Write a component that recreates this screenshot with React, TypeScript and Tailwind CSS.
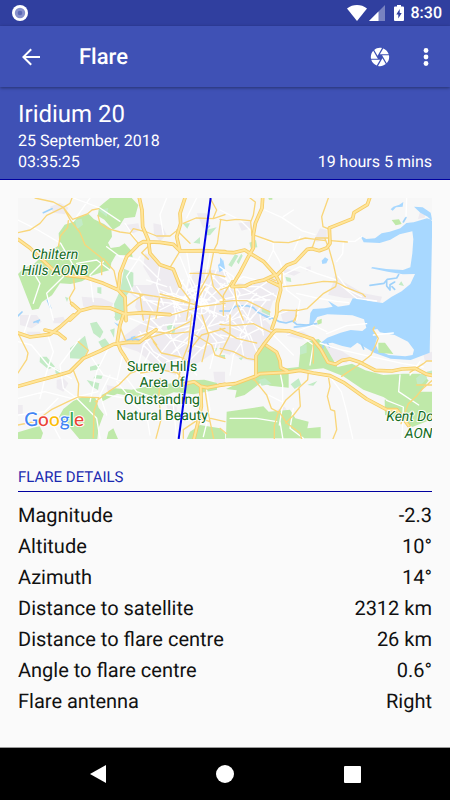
import React from 'react';

interface MapTile {
  x: number;
  y: number;
  urban: string;
  parks: string;
  woods: string;
  water: string;
  islands: string;
  rivers: string;
  streets: string;
  roads: string;
  motorways: string;
}

// Map geometry, one entry per quadrant. Each quadrant keeps its own origin.
const tiles: MapTile[] = [
  {
    x: -24,
    y: -24,
    urban:
      'M345 105l40-5 5 20-25 12zM430 100l25 5 15 30-20 18-18-18zM405 190l25 12 30 25 40 20 10 45 20 15 20-60 40-10 60 10v143H400l-25-40 10-40 45-30-30-50zM120 50l30-12 25 15-10 20-35-5zM215 320l60 5 35 15-10 20-80-10zM560 70l30 0 10 30-20 15zM365 285l70 0 15 35-50 20-40-30zM130 385l30-5 10 20-40 0z',
    parks:
      'M24 252l18-18 30-12 30-30 46-26-2-36 18-26 24-8 12-12 36-12 16 16 30 14 22 16 2 22-12 18 8 16 26-4 16-10 20 22 4 20-22-6-28-2-14 24-4 22-22 6-36 12-26 16-34 8-32-2-24 36-30 20-10 20-20 4zM268 50l18-15 14-11h65l20 21-10 36-32 4-14 22-20 12-26-30-20-12z',
    woods:
      'M342 236l28 12v40l-20 28v60l-34 14-4-48 18-40zM262 292l12 0 0 20-12-4zM588 120l32-8-20 24h-12zM550 158l20-17v20zM518 100l22 0-8 16zM195 90l20-4 4 18-18 14zM265 60l30-6-5 26zM165 320l10 4-4 12z',
    water: 'M640 210l-16 15 4 22 17-10z',
    islands: '',
    rivers: 'M100 68l26-12M112 330l10 24M590 118l8-10M24 378l12-12',
    streets:
      'M24 90l60 30 68 40 40 70M190 24l80 30 60 40M290 170l40 30 60 10 60 60M240 24l-50 70M280 215l-40 40 10 80M200 220l60-10 40 30M60 230l30 50-20 60M160 260l-50 50 20 80M390 200l-40 60 20 50 80 40M450 225l-10 60 20 60M520 270l-30 60 10 60M560 24l-30 60M470 24l-20 50 10 60M345 100l40 60 30-10M530 185l10 60-10 50M600 290l-60 30-40 20M645 280l-75 70 75-20M490 240l80 110-120-50M400 330l170 20-160 40M570 350l75 30M570 350l-40 40M570 350l50-110M570 350l30-160M570 350l-60-150M530 300l60 0 30 30-10 50M520 340l10-40 50-20 50 20M480 290l30 90M430 320l60-10 40 20M450 360l60-30 40-30M600 250l45 50M540 260l60 110M585 300l60 50M550 320l70 60M490 350l70 20M460 310l60 50M510 320l90 10M410 270l60 20M380 290l60 90M552 350a22 22 0 1 0 44 0a22 22 0 1 0-44 0M560 340l30 20M560 360l30-22M575 328v44M556 350h38',
    roads:
      'M24 128l36-8 30-20 20-24 50-24 20-12 6-16M75 24l55 12 30 16 28 36 44-16 14-12 20-4M160 52l22 40 28 36 15 36 24 20 26 20M264 76l6 24 24 16 36 10 30 4 25 30M360 130l10-14 40 10 30 12 40 0 18-14M175 92l-2 20-22 26-6 32M275 204l0 50M190 260l4 36-16 28 8 24M280 206l32 36 13 58M325 300l65 12 90 14 60 14M348 350l50-35M520 100l38-16 52 2 35-12M600 24l20 36-10 24M632 90l-10 70-10 20-14 70-28 50-15 50M510 183l-28 46M425 158l-30 30 20 20M500 120l40 40M450 312l60 16 60 22M510 290l30 40-10 60M600 240l10 50 35 40M540 250l60 0 45 10M480 376l90-26 75-10M448 325l-10 60M390 315l10 75M555 340l30-50',
    motorways:
      'M388 24l8 36 2 50 17 40 5 40 30 34 40 14 20 50M24 148l36 26 42 40 28 26 40 16 55 6 55 18 45 20 20 22 3 70M325 300l5-50 20-50 35-36 15-9 50 2 40 6 20 20 70-1 65 3M525 24l-15 46 2 30-12 40 10 43M185 340l25 22 40-10 50 2 45 18 55-4 80 6M210 362l-30 28',
  },
  {
    x: 606,
    y: -24,
    urban:
      'M55 100l35-6 5 20-30 8zM285 145l15-30 20 5 0 26-30 10zM100 270l60-10 20 20-15 50-60 20zM0 285l60-5 60 10 40 40-20 60H0zM345 255l25 20 60 35 56 10-6 18-50-12-56-2-50-10 15-35zM258 232l14-4 0 14-12 2zM182 245l20-8 40 10-20 10zM600 65l18 4-4 14-20 4zM180 365l50-8 0 40-40 0z',
    parks: 'M515 90l22-2 8 14-18 4zM145 24h12v5h-10z',
    woods:
      'M25 225l20-32 10 4-20 34zM50 215l14-24 4 6-12 26zM88 158l20-8 4 22-20 2zM196 260l16 4 2 12-14-2zM536 284l8-10 8 14zM125 355l25 8 0 14-25-12zM20 275l15 10-10 10z',
    water:
      'M637 90l-16-5-40 12-22 2-18 16-32 10-24 5-20 15-26 2-18-10 10 20 48 2 32-10 28-16 38-9 3 24-3 42-6 42-22 8-50-3-42-6-4 4 50 10 46 8 36-1-14 30-26 22-30 16-27 19-45-7-12-6-33-1-10 20-34 5-30-18 14 18-24 5-35 2-8 12-3 34-47 6 0 6 55-8 16-26 30-8 75 3 35 12 7 25-12 10-35-3-30 8-40 15-25 20 40-5 30 10 25 5 20-15 25 15 25 15 50 18 60 4 57-22zM512 58l8-8 18-6 12-8-2 14-20 2-10 10zM582 50l26 2 24 16 5 26-14-14-22-12zM305 212l10-10 10 6-6 12-12 2zM0 202l8 8-4 30-4-4z',
    islands: '',
    rivers:
      'M450 286l42-6 10-12 28-4 6-10M500 272l0 16 10 12 0-16 14-8M516 290l8 8M550 96l8-14M0 363l30 0 16-14 34-2 20 6 14 14 16 8 20 12',
    streets:
      'M135 60l50 22 60 40 40 12M0 60l60 30 40 40M105 135l55 25 0 20-16 34M160 180l20 36 10 34M240 140l-18 40M370 155l-2 36-18 24M425 140l-20 14-30 0M560 24l-2 56M230 310l60 14 60 10 36 4M180 260l60-30 50 20 60 20M220 60l-30 20M350 275l60 50 60 8M355 260l30 40 40 20M0 260l60 30 60 0 50 30M0 300l70-40 40 10M20 250l40 60-40 80M60 290l80 40-50 60M0 330l90-20 60-40M0 230l40 30 10 60M80 390l20-60 60-20M30 390l80-80M0 280l50 20M10 240l20 60 60 90M40 330l110 0M190 260l10 40 40 30-10 60M130 390l80-30',
    roads:
      'M0 88l20 4 30-4 40 4M90 24l16 12-6 40-8 20 4 40M105 136l55 20 46 2 50-14 30 4 30 4M325 24l-20 56 4 30 20 8M315 146l12 30 14 50 10 46-4 18-36 20-50 46-30 6-44-2-20 12M332 152l50 4M190 290l60-6 60-10 38 2 30 16 50 20 8 8M275 178l12-34 40 0M40 272l10 70 20 48M0 336l40-4 40 0 30 14 40 20M0 300l30-12M36 272l-26 44 0 60M186 280l0-30M166 272l-16-8M230 358l-4 32',
    motorways:
      'M128 24l-2 30-20 46-6 34 0 40-14 24-26 50-24 40M0 186l40 2 34-8 16 10 40 24 36 40 14 26 2 20-10 40-2 34-14 41M170 256l30-30 26-10 36-38 14-2 22 6 22-8 10-14-2-46 10-4 60-24 4-18 40-24 7-20M36 290l40-2 20-10 36-8 34-16M145 272l34 16',
  },
  {
    x: -24,
    y: 351,
    urban:
      'M345 60l70-50 40-10h190v60l-30 50-60 40-60 30-50-20-60-50-60-20zM30 0l50 0 15 20-30 20-35-10zM140 195l20-5 15 15-15 25-20-10zM290 210l24 5 6 25-25 5zM50 50l40 0 5 14-35 6zM610 170l35 0v40h-30zM470 270l30 5 0 20-25-5zM20 270h18v30H24zM430 80l90 10 40 60-50 20-70-30z',
    parks:
      'M190 258l26-12 40 2 10 30 15 20-15 40-4 34h-54l-30-36-38-18 20-36zM24 352l45-14 20-4 10 20-6 18H24zM275 240l40-20 50 4 50-10 60-8 70-10 38-2 38 10v20l-70 14-60-6-50 20-60-6-60-10-46 24zM540 350l30-20 60 10 15 16v16H530zM295 350l15-10 14 32h-34z',
    woods:
      'M180 100l45-38 10 40-15 30-40-2zM240 25l20-5 20 30-10 20-20-15zM265 80l20-10 15 20-20 15zM300 45l14-5-2 28zM90 125l20 0 25 30-20 8-26-22zM135 160l30 15-10 10-18-10zM470 35l15-12 12 16-4 16-16 0zM312 5l16-5 10 8-18 10zM240 155l30-8-2 16-28 4zM230 195l38 10-4 20-18-10zM250 190l8-10 20 2-4 10zM610 100l12-2-4 12zM625 120l20 0v12z',
    water: 'M362 66l14-4 2 12-12 4zM312 22l14 6 2 10zM75 20l16-8-6 14z',
    islands: '',
    rivers: 'M350 76l20-6 20 6M72 22l16-6',
    streets:
      'M24 80l40 10 50 60 70 40M60 0l-20 60M110 50l20 60-20 60-20 80M210 70l-60 80 10 70 40 30M240 120l40 60 60 20M300 90l-40 80-20 90M340 110l-20 90 50 60M24 250l80-20 80 20 80-20M200 250l60 60 10 60M300 180l-30 60 20 60M400 90l-20 80 80 40M460 30l-60 60 60 60M500 0l-20 60 30 60 20 70M540 40l-60 40-40 50M555 20l-90 10-80 30M560 0l60 80-20 80M640 20l-90 30-60 60M645 80l-60 10-60 60M600 0l-40 60-80 60M350 190l30 40 60 20M290 240l60 10 60 50 10 60M450 240l40 30 10 100M590 225l10 60-20 80M24 300l80-10 40-40M120 315l30 55M420 10l60 60 100 30M470 140l50-10 40 50M390 50l40 60 70 40M620 0l-30 40 50 30M360 10l100 40 90-20M490 150l20 50M420 110l-30 60 30 40',
    roads:
      'M24 54l30 60-4 20-26 40M24 60M190 166l16 40-2 36M24 330l50-10 50-36 50-24 30-14 60 2M256 260l40-30 30-20 36-36 30-10M266 248l-14 40-2 80M205 80l30 26-8 16M350 85l-20-50M392 174l60-10 50 10 20 24M430 80l24 34 56 12 20 10M450 190l-4 60 8 60-16 60M585 225l12 80 14 65M505 200l10-60 20-50 10-90M540 20l-60 30-80 24M555 60l50 30 10 30 30 10M370 70l60-20 60 6 50-6M420 0l-10 50 30 40M645 40l-70 20-40 50M576 0l20 60-20 80M600 320l-30-10-50 34 0 26M602 310l43 10',
    motorways:
      'M24 54l36 12 60-8 30-22 40-36M105 45l40 10 20 16M24 214l56-16 60-16 40-12 40-40 50-22 40-20 44-6 34 0 30-24 20-14M340 0l-10 30-8 50 10 26 12 18 18 30 30 10M520 208l32-8 20 14 20 4 53-10M572 214l2 60-8 40-14 58',
  },
  {
    x: 606,
    y: 351,
    urban:
      'M0 0h120l40 40-20 50-36 50-44-10-60-40zM310 80l50 24 30 20-10 20-60-10zM165 325l20-10 6 24-20 10zM610 118l27-8v24l-22 6zM0 80l40 20-10 20-30-10zM170 285l24-10 10 16-24 8zM200 44l50 6 20 14-20 10-50-12zM486 58l24-4 4 12-24 4z',
    parks:
      'M45 248l5-22-32-4 30-14 60-28 6-80 24-10 34 30 10 42 54-6 6-60 24-18 30-6 20 22 36 62 44-10 40 20 54 14 60-4 50 0 26 20-28 40-28 32-44 0-36-22-60-22-60-40-60-24-104 10 0 48-56-6-26-10-50 38zM494 254l60 0 44-24 39 0v82l-60 24-40-26-42-10zM20 290l110-16 16 16 64-6 16 26 40 10-4 20 40-4 0 34H18z',
    woods:
      'M212 208l24-18 8 20-20 12zM262 210l30-12-12 14zM240 95l20-8 0 26-20 6zM588 190l24-20 10 20-16 16-14 2zM56 130l14-4-6 10zM115 195l20-5 20 16-30 6zM620 170l17-4v16h-12z',
    water: '',
    islands:
      'M460 44l12-2 8 10 44 8 40 20 18 24-4 16-22 4-50-4-32-14-8-20 6-20z',
    rivers: 'M128 0l36 12 14 8 20 4 20-6 12 10 30 2 30-4M312 86l-6 18M322 84l6 12M425 88l6 14',
    streets:
      'M240 60l40 30-10 60M200 60l80-30 40 20M320 56l60-24 60-6M300 84l60 20 80 18 110 24 60 10M540 180l-4 50 60 40M500 256l50 20-4 94M334 190l30 40 16 60 18 80M180 170l8 40 0 60-10 60M0 60l60 10 60-30M20 0l60 60-40 60M100 0l-40 60 10 60M0 20l90 40 20 50M120 0l10 60M160 60l60 60M40 120l-10 60M460 60l60-6M170 320l-60-10-80 0M180 320l10 60M220 280l-10 60 40 30M145 240l40 20M600 140l-30 40M0 30l70-30 60 50M60 0l30 80',
    roads:
      'M0 28l40 4 60-6 60 30M30 0l0 60-30 60M0 40l50 30 60 14M230 0l-10 20M280 84l0 60M100 190l24 30 16 20 14 40 26 14 20 30 40 30 6 22M265 170l-2 24-26 24 4 56-20 26-24 24M237 220l-40 36-22 36-12 40 0 40M326 190l4 24-8 30 10 40 12 4 6 56-12 30M365 184l50-34 38-30 14-30 8-20-16-26 4-8M570 172l40-26 10-8 17 0M590 210l47 0M637 196l-30 26-16 20-26 24-22 60M0 100l40 10 40 20 24 4M0 340l20 16M120 175l-20 20',
    motorways:
      'M0 210l46-4 60-22 14-8 80-4 40-6 40 8 50 8 40 20 70 50 60 32 30 0 36 48M108 182l0-60 22-32 30-38 8-6 40 2 70 24 24 30 22 40 22 6 20-12 24-4 30 10 46 24 50 2 30-6 40-2 34 18 29 6M140 92l30 20 10 26 2 20 20 10',
  },
];

const details = [
  { label: 'Magnitude', value: '-2.3' },
  { label: 'Altitude', value: '10°' },
  { label: 'Azimuth', value: '14°' },
  { label: 'Distance to satellite', value: '2312 km' },
  { label: 'Distance to flare centre', value: '26 km' },
  { label: 'Angle to flare centre', value: '0.6°' },
  { label: 'Flare antenna', value: 'Right' },
];

type Layer = Exclude<keyof MapTile, 'x' | 'y'>;

const MapLayer: React.FC<{ layer: Layer; fill?: string; stroke?: string; width?: number }> = ({
  layer,
  fill = 'none',
  stroke = 'none',
  width = 0,
}) => (
  <g fill={fill} stroke={stroke} strokeWidth={width} strokeLinejoin="round" strokeLinecap="round">
    {tiles.map((tile, i) => (
      <path key={i} d={tile[layer]} transform={`translate(${tile.x} ${tile.y})`} />
    ))}
  </g>
);

const labels = [
  { text: 'Chiltern', x: 111, y: 182, italic: true },
  { text: 'Hills AONB', x: 111, y: 231, italic: true },
  { text: 'Surrey Hills', x: 432, y: 518 },
  { text: 'Area of', x: 432, y: 568 },
  { text: 'Outstanding', x: 432, y: 617 },
  { text: 'Natural Beauty', x: 432, y: 667 },
];

const FlareMap = () => (
  <svg viewBox="0 0 1242 723" className="block w-full bg-[#f7f7f7]" role="img" aria-label="Flare map">
    <MapLayer layer="urban" fill="#eeebf0" />
    <MapLayer layer="parks" fill="#bfe9a9" />
    <MapLayer layer="woods" fill="#c3ebc6" />
    <MapLayer layer="water" fill="#a8d8ff" />
    <MapLayer layer="islands" fill="#f7f7f7" />
    <path d="M1081 434h20l25 34-45-4zM897 368l14-6 0 14-12 4z" fill="#bfe9a9" />
    <MapLayer layer="rivers" stroke="#a0d2fa" width={5} />
    <MapLayer layer="streets" stroke="#ffffff" width={4} />
    <MapLayer layer="roads" stroke="#f9d67a" width={4} />
    <MapLayer layer="motorways" stroke="#f5cc66" width={11} />
    <MapLayer layer="motorways" stroke="#ffe59a" width={6} />
    <g
      className="font-['Roboto',sans-serif]"
      fontSize="42"
      fill="#126b1c"
      stroke="#ffffff"
      strokeWidth="6"
      strokeLinejoin="round"
      paintOrder="stroke"
      textAnchor="middle"
    >
      {labels.map((label) => (
        <text key={label.text} x={label.x} y={label.y} fontStyle={label.italic ? 'italic' : 'normal'}>
          {label.text}
        </text>
      ))}
      <g fontStyle="italic" textAnchor="start">
        <text x="1105" y="670">Kent Do</text>
        <text x="1160" y="719">AON</text>
      </g>
    </g>
    <path d="M578 0Q530 360 482 723" fill="none" stroke="#0000e6" strokeWidth="6" />
    <text
      x="19"
      y="684"
      fontSize="57"
      className="font-['Lato',sans-serif] font-medium"
      stroke="#ffffff"
      strokeWidth="6"
      paintOrder="stroke"
    >
      <tspan fill="#4285f4">G</tspan>
      <tspan fill="#ea4335">o</tspan>
      <tspan fill="#fbbc05">o</tspan>
      <tspan fill="#4285f4">g</tspan>
      <tspan fill="#34a853">l</tspan>
      <tspan fill="#ea4335">e</tspan>
    </text>
  </svg>
);

const StatusBar = () => (
  <div className="flex h-[26px] items-center justify-between bg-[#303f9f] pr-2 pl-3">
    <svg viewBox="0 0 16 16" className="h-4 w-4">
      <circle cx="8" cy="8" r="8" fill="#fff" />
      <circle cx="8" cy="8" r="5.2" fill="#8790cb" />
      <circle cx="8" cy="8" r="2.3" fill="#5c69b5" />
    </svg>
    <div className="flex items-center">
      <svg viewBox="0 0 20 16" className="h-4 w-5" fill="#fff">
        <path d="M0 3.5C6-1.1 14-1.1 20 3.5L10 16z" />
      </svg>
      <svg viewBox="0 0 16 16" className="ml-0.5 h-4 w-4" fill="#fff">
        <path d="M16 0v16H0z" opacity=".35" />
        <path d="M9.5 6.5V16H0z" />
      </svg>
      <svg viewBox="0 0 10 16" className="ml-2 h-4 w-3">
        <path
          fill="#fff"
          fillRule="evenodd"
          d="M3 0h4v1.6h2q1 0 1 1V15q0 1-1 1H1q-1 0-1-1V2.600q0-1 1-1h2zM5.700 4L2.300 9.500h2v4L7.700 8h-2z"
        />
      </svg>
      <span className="ml-1.5 text-base leading-5 font-medium text-white">8:30</span>
    </div>
  </div>
);

const Toolbar = () => (
  <header className="relative flex h-[61px] items-center bg-[#3f51b5] pr-[14px] pl-[19px] text-white shadow-[0_1px_3px_rgba(0,0,0,0.4)]">
    <button type="button" aria-label="Back" className="h-6 w-6">
      <svg viewBox="0 0 24 24" fill="currentColor">
        <path d="M21 11H6.830l6.090-6.090L11.500 3.500 3 12l8.500 8.500 1.410-1.410L6.830 13H21z" />
      </svg>
    </button>
    <h1 className="ml-9 flex-1 pt-0.5 text-[22px] leading-7 font-medium">Flare</h1>
    <button type="button" aria-label="Camera" className="h-[22px] w-[22px]">
      <svg viewBox="0 0 24 24" fill="currentColor">
        <path d="M9.400 10.500l4.770-8.260C13.470 2.090 12.750 2 12 2c-2.400 0-4.600.85-6.320 2.250l3.660 6.350.06-.1zM21.540 9c-.92-2.920-3.150-5.260-6-6.340L11.880 9h9.660zm.26 1h-7.490l.29.5 4.760 8.250C21 16.970 22 14.610 22 12c0-.69-.07-1.350-.2-2zM8.540 12l-3.900-6.750C3.010 7.030 2 9.390 2 12c0 .69.07 1.350.2 2h7.490l-1.150-2zm-6.080 3c.92 2.920 3.150 5.260 6 6.340L12.120 15H2.460zm11.270 0l-3.900 6.760c.7.15 1.420.24 2.170.24 2.400 0 4.600-.85 6.320-2.250l-3.660-6.350-.93 1.600z" />
      </svg>
    </button>
    <button type="button" aria-label="More options" className="ml-[25px] h-5 w-5">
      <svg viewBox="0 0 20 20" fill="currentColor">
        <circle cx="10" cy="3.500" r="2.400" />
        <circle cx="10" cy="10" r="2.400" />
        <circle cx="10" cy="16.500" r="2.400" />
      </svg>
    </button>
  </header>
);

const NavBar = () => (
  <nav className="flex h-[53px] items-center justify-around border-t border-[#999] bg-black px-[34px]">
    <button type="button" aria-label="Back" className="h-[18px] w-[18px]">
      <svg viewBox="0 0 18 18" fill="#fff">
        <path d="M17 0v18L1 9z" />
      </svg>
    </button>
    <button type="button" aria-label="Home" className="h-[18px] w-[18px] rounded-full bg-white" />
    <button type="button" aria-label="Recent apps" className="h-[17px] w-[17px] rounded-[1px] bg-white" />
  </nav>
);

const App: React.FC = () => {
  return (
    <div className="flex min-h-screen flex-col bg-[#fafafa] font-['Roboto',sans-serif] [text-rendering:geometricPrecision]">
      <StatusBar />
      <Toolbar />
      <section className="border-b border-[#00009f] bg-[#3f51b5] px-[18px] pt-[13px] pb-[7px] text-white">
        <h2 className="text-2xl leading-7">Iridium 20</h2>
        <p className="mt-0.5 text-base leading-[21px]">25 September, 2018</p>
        <div className="flex justify-between text-base leading-[21px]">
          <span>03:35:25</span>
          <span>19 hours 5 mins</span>
        </div>
      </section>

      <main className="flex-1 px-[18px] pt-[18px]">
        <FlareMap />
        <h3 className="mt-7 border-b border-[#00009f] pb-1 text-[15px] leading-5 text-[#1a2ab0]">
          FLARE DETAILS
        </h3>
        <dl className="mt-2 text-xl leading-[31px] text-[#111]">
          {details.map((item) => (
            <div key={item.label} className="flex justify-between">
              <dt>{item.label}</dt>
              <dd>{item.value}</dd>
            </div>
          ))}
        </dl>
      </main>
      <NavBar />
    </div>
  );
};

export default App;
